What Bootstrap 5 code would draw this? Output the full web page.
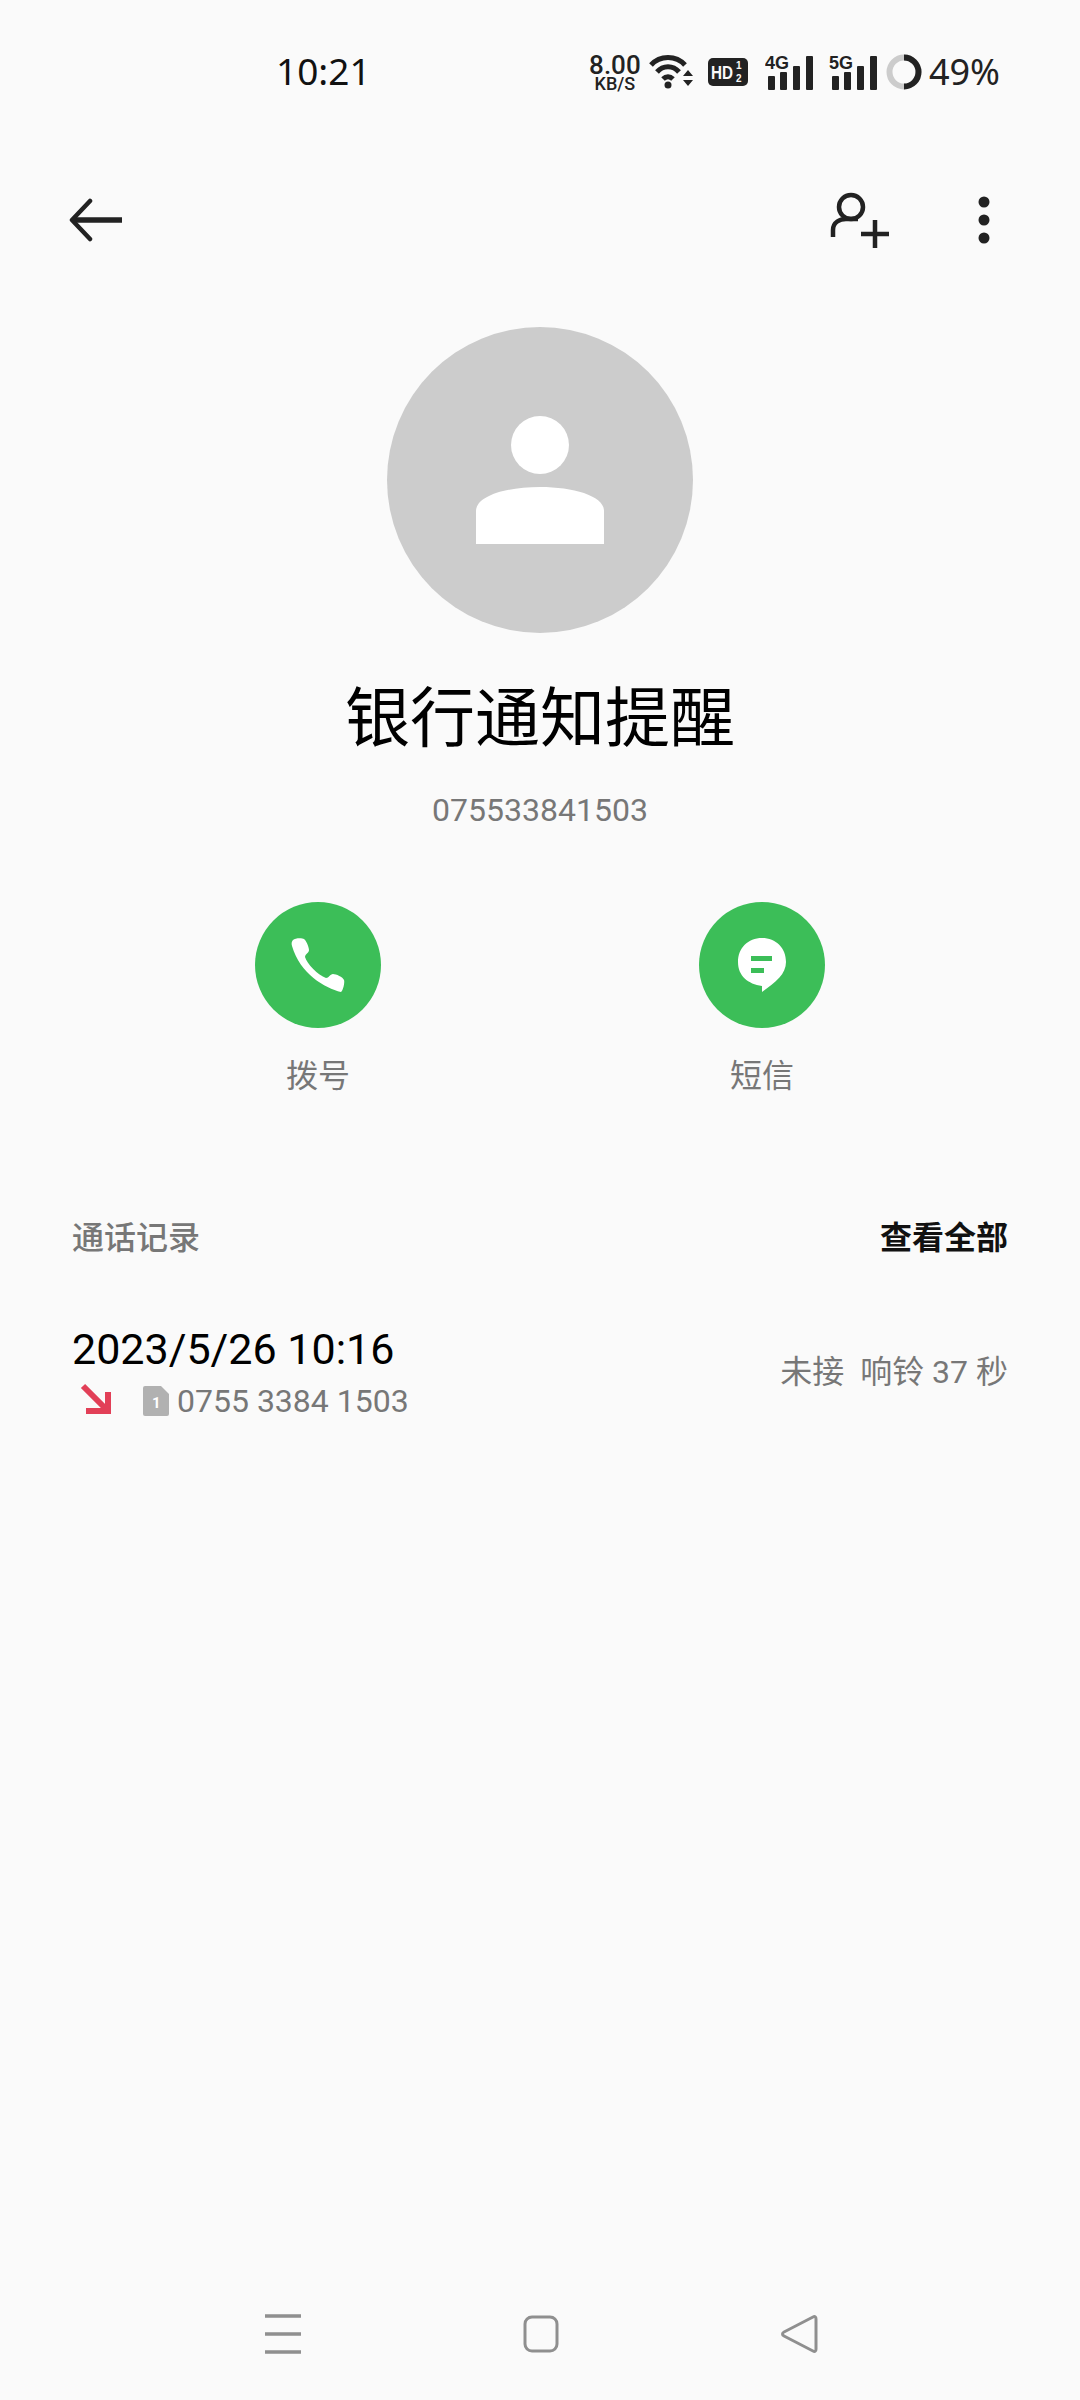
<!DOCTYPE html>
<html lang="zh">
<head>
<meta charset="utf-8">
<title>银行通知提醒</title>
<link href="https://cdn.jsdelivr.net/npm/bootstrap@5.3.0/dist/css/bootstrap.min.css" rel="stylesheet">
<style>
html,body{background:#fafafa;}
body{width:1080px;height:2400px;overflow:hidden;font-family:Roboto,"Noto Sans CJK SC",sans-serif;color:#000;}
.screen{width:1080px;height:2400px;}
.status-row{height:144px;padding:0 80px 0 276px;}
.clock{font-size:37px;line-height:1;color:#111;font-family:"Noto Sans",Roboto,sans-serif;margin-bottom:3px;}
.speed{width:52px;text-align:center;line-height:1;color:#222;font-family:Roboto,sans-serif;margin-right:2px;}
.speed-top{font-size:26px;font-weight:500;line-height:22px;}
.speed-bottom{font-size:18px;font-weight:500;line-height:15px;}
.pct{font-size:36px;line-height:1;color:#222;font-family:"Noto Sans",sans-serif;margin-left:7px;}
.wifi-icon{margin-left:6px;}
.hd-icon{margin-left:13px;}
.sig-icon{margin-left:17px;}
.sig-icon-b{margin-left:16px;}
.ring-icon{margin-left:9px;}
.tool-row{height:152px;padding:0 90px 0 69px;}
.dots-icon{margin-left:88px;}
.avatar-disc{width:306px;height:306px;background:#cccccc;margin-top:31px;}
.person-name{font-size:65px;line-height:90px;margin-top:35px;font-weight:400;font-family:"Noto Sans CJK SC",sans-serif;color:#000;}
.person-num{font-size:32px;line-height:40px;color:#777;margin-top:32px;}
.action-row{margin-top:72px;padding:0 255px;}
.action-box{width:126px;}
.action-disc{width:126px;height:126px;background:#3cbe58;}
.action-label{font-size:32px;line-height:44px;color:#777;margin-top:23px;white-space:nowrap;font-family:"Noto Sans CJK SC",sans-serif;}
.log-head{margin-top:118px;padding:0 72px;font-size:32px;line-height:44px;font-family:"Noto Sans CJK SC",sans-serif;}
.log-title{color:#777;font-weight:500;}
.log-all{color:#111;font-weight:700;}
.log-row{margin-top:64px;padding:0 72px;}
.log-date{font-size:43px;line-height:56px;color:#000;}
.log-num{font-size:32px;line-height:44px;color:#777;margin-top:2px;}
.log-state{font-size:32px;line-height:44px;color:#777;font-family:Roboto,"Noto Sans CJK SC",sans-serif;white-space:pre;}
.arrow-slot{width:71px;padding-left:7px;margin-top:-5px;}
.sim-slot{margin-right:8px;}
.nav-row{position:absolute;left:0;right:0;top:2306px;height:56px;padding:0 262px 0 265px;}
</style>
</head>
<body>
<div class="screen position-relative d-flex flex-column">
  <div class="status-row d-flex align-items-center justify-content-between">
    <div class="clock">10:21</div>
    <div class="d-flex align-items-center">
      <div class="speed"><div class="speed-top">8.00</div><div class="speed-bottom">KB/S</div></div>
      <svg class="wifi-icon" width="46" height="36" viewBox="0 0 46 36"><g fill="none" stroke="#222" stroke-width="5"><path d="M2 11C11 1 27 1 36 11"/><path d="M8 18C14 11 24 11 30 18"/><path d="M14 25C17 22 21 22 24 25"/></g><circle cx="19" cy="31" r="3.5" fill="#222"/><path d="M34 22h10l-5-6zM34 26h10l-5 6z" fill="#222"/></svg>
      <svg class="hd-icon" width="40" height="30" viewBox="0 0 40 30"><rect width="40" height="28" y="1" rx="5" fill="#222"/><text x="3" y="22" font-family="Liberation Sans,sans-serif" font-weight="700" font-size="19" fill="#fafafa" textLength="22" lengthAdjust="spacingAndGlyphs">HD</text><text x="28" y="12" font-family="Liberation Sans,sans-serif" font-weight="700" font-size="10" fill="#fafafa">1</text><text x="28" y="25" font-family="Liberation Sans,sans-serif" font-weight="700" font-size="10" fill="#fafafa">2</text></svg>
      <svg class="sig-icon" width="48" height="36" viewBox="0 0 48 36"><text x="0" y="15" font-family="Liberation Sans,sans-serif" font-weight="700" font-size="18" fill="#222" textLength="24" lengthAdjust="spacingAndGlyphs">4G</text><g fill="#222"><rect x="3" y="22" width="7" height="14" rx="1"/><rect x="15" y="18" width="7" height="18" rx="1"/><rect x="28" y="12" width="7" height="24" rx="1"/><rect x="41" y="2" width="7" height="34" rx="1"/></g></svg>
      <svg class="sig-icon-b" width="48" height="36" viewBox="0 0 48 36"><text x="0" y="15" font-family="Liberation Sans,sans-serif" font-weight="700" font-size="18" fill="#222" textLength="24" lengthAdjust="spacingAndGlyphs">5G</text><g fill="#222"><rect x="3" y="22" width="7" height="14" rx="1"/><rect x="15" y="18" width="7" height="18" rx="1"/><rect x="28" y="12" width="7" height="24" rx="1"/><rect x="41" y="2" width="7" height="34" rx="1"/></g></svg>
      <svg class="ring-icon" width="36" height="36" viewBox="0 0 36 36"><circle cx="18" cy="18" r="14.5" fill="none" stroke="#ccc" stroke-width="6"/><path d="M18 3.5A14.5 14.5 0 0 1 18 32.5" fill="none" stroke="#222" stroke-width="6"/></svg>
      <div class="pct">49%</div>
    </div>
  </div>

  <div class="tool-row d-flex align-items-center justify-content-between">
    <svg width="54" height="44" viewBox="0 0 54 44"><path d="M21 3L3 22L21 41" fill="none" stroke="#222" stroke-width="4.5" stroke-linecap="round" stroke-linejoin="round"/><path d="M4 22H53" fill="none" stroke="#222" stroke-width="5.5"/></svg>
    <div class="d-flex align-items-center">
      <svg width="60" height="58" viewBox="0 0 60 58"><circle cx="21" cy="16" r="12" fill="none" stroke="#222" stroke-width="4.5"/><path d="M3 46V39C3 31 10 28 16 28H28" fill="none" stroke="#222" stroke-width="4.5"/><path d="M45 29V57M31 43H59" fill="none" stroke="#222" stroke-width="4.5"/></svg>
      <svg class="dots-icon" width="12" height="48" viewBox="0 0 12 48"><circle cx="6" cy="6" r="5.5" fill="#222"/><circle cx="6" cy="24" r="5.5" fill="#222"/><circle cx="6" cy="42" r="5.5" fill="#222"/></svg>
    </div>
  </div>

  <div class="d-flex flex-column align-items-center">
    <div class="avatar-disc rounded-circle d-flex align-items-center justify-content-center">
      <svg width="128" height="128" viewBox="0 0 128 128"><circle cx="64" cy="29" r="29" fill="#fff"/><path d="M0 128V95C0 80 30 71 64 71S128 80 128 95V128Z" fill="#fff"/></svg>
    </div>
    <div class="person-name">银行通知提醒</div>
    <div class="person-num">075533841503</div>
  </div>

  <div class="action-row d-flex justify-content-between">
    <div class="action-box d-flex flex-column align-items-center">
      <div class="action-disc rounded-circle d-flex align-items-center justify-content-center">
        <svg width="54" height="54" viewBox="0 0 54 54"><path d="M2 2C4 0 11 0 13 1C15 2 18 9 18 12C18 15 14 16 14 19C16 26 27 37 35 40C38 40 39 36 42 36C45 36 52 39 53 42C54 44 52 53 50 54C34 50 9 36 1 8C0 5 1 3 2 2Z" fill="#fff"/></svg>
      </div>
      <div class="action-label">拨号</div>
    </div>
    <div class="action-box d-flex flex-column align-items-center">
      <div class="action-disc rounded-circle d-flex align-items-center justify-content-center">
        <svg width="48" height="54" viewBox="0 0 48 54"><path d="M24 0C38 0 48 10 48 24C48 36 38 44 24 54V48C10 46 0 38 0 24C0 10 10 0 24 0Z" fill="#fff"/><rect x="13" y="18" width="21" height="5" fill="#3cbe58"/><rect x="13" y="30" width="13" height="5" fill="#3cbe58"/></svg>
      </div>
      <div class="action-label">短信</div>
    </div>
  </div>

  <div class="log-head d-flex justify-content-between">
    <div class="log-title">通话记录</div>
    <div class="log-all">查看全部</div>
  </div>

  <div class="log-row d-flex justify-content-between align-items-center">
    <div>
      <div class="log-date">2023/5/26 10:16</div>
      <div class="log-num d-flex align-items-center">
        <div class="arrow-slot d-flex"><svg width="32" height="32" viewBox="0 0 32 32"><path d="M4 3L26 25M29 9V28H7" fill="none" stroke="#e23f57" stroke-width="6"/></svg></div>
        <svg class="sim-slot" width="26" height="30" viewBox="0 0 26 30"><path d="M2 0H18L26 8V28Q26 30 24 30H2Q0 30 0 28V2Q0 0 2 0Z" fill="#b1b1b1"/><text x="9" y="22" font-family="Roboto,sans-serif" font-weight="700" font-size="15" fill="#fff">1</text></svg>
        <span>0755 3384 1503</span>
      </div>
    </div>
    <div class="log-state">未接  响铃 37 秒</div>
  </div>

  <div class="nav-row d-flex align-items-center justify-content-between">
    <svg width="36" height="40" viewBox="0 0 36 40"><path d="M0 2H36M0 20H36M0 38H36" stroke="#8f8f8f" stroke-width="3.5"/></svg>
    <svg width="36" height="38" viewBox="0 0 36 38"><rect x="2" y="2" width="32" height="34" rx="7" fill="none" stroke="#8f8f8f" stroke-width="3"/></svg>
    <svg width="38" height="40" viewBox="0 0 38 40"><path d="M33 3C35 2 36 3 36 5V35C36 37 35 38 33 37L4 22C2 21 2 19 4 18Z" fill="none" stroke="#8f8f8f" stroke-width="3"/></svg>
  </div>
</div>
</body>
</html>
